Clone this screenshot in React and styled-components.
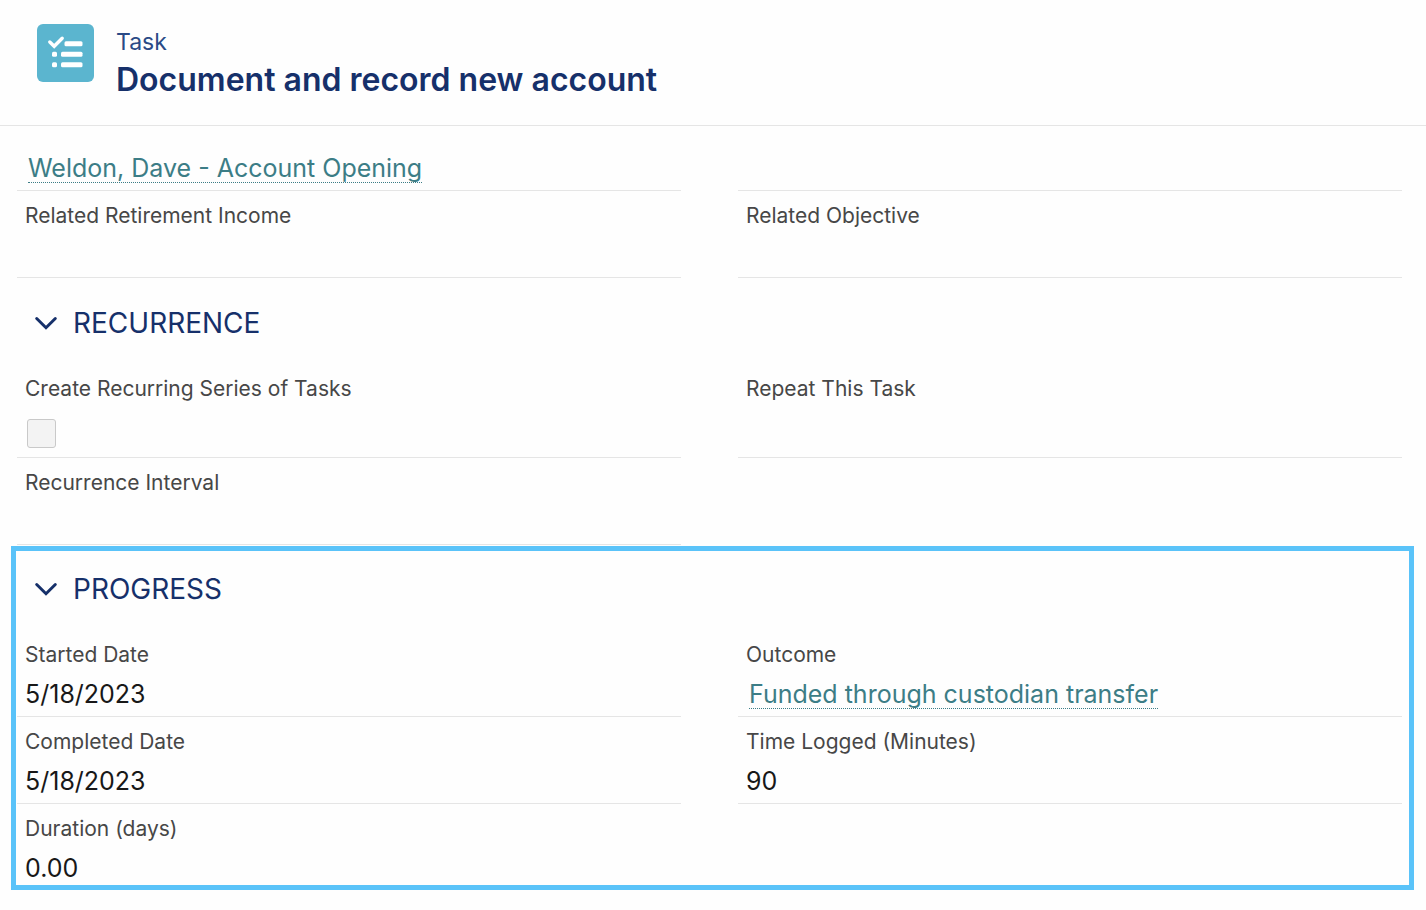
import React from 'react';
import styled, { createGlobalStyle } from 'styled-components';

const COLORS = {
  heading: '#16306a',
  entity: '#2a4a86',
  link: '#3c7d86',
  label: '#474747',
  text: '#181818',
  line: '#e5e5e5',
  task: '#5bb5cf',
  highlight: '#5ac3f9',
};

const relatedFields = [
  { id: 'plan', value: 'Weldon, Dave - Account Opening', link: true },
  { id: 'plan-empty' },
  { id: 'income', label: 'Related Retirement Income' },
  { id: 'objective', label: 'Related Objective' },
];

const recurrenceFields = [
  { id: 'series', label: 'Create Recurring Series of Tasks', checkbox: true },
  { id: 'repeat', label: 'Repeat This Task' },
  { id: 'interval', label: 'Recurrence Interval' },
];

const progressFields = [
  { id: 'started', label: 'Started Date', value: '5/18/2023' },
  { id: 'outcome', label: 'Outcome', value: 'Funded through custodian transfer', link: true },
  { id: 'completed', label: 'Completed Date', value: '5/18/2023' },
  { id: 'time', label: 'Time Logged (Minutes)', value: '90' },
  { id: 'duration', label: 'Duration (days)', value: '0.00', last: true },
];

const TaskIcon = () => (
  <svg viewBox="0 0 57 58" aria-hidden="true">
    <path d="M12.8 18l4.4 4.3 8-8" fill="none" stroke="#fff" strokeWidth="3.4" strokeLinecap="round" strokeLinejoin="miter" />
    <g fill="#fff">
      <rect x="27.5" y="17.2" width="18" height="5" rx="1.5" />
      <rect x="15" y="27.7" width="5" height="5" rx="1.5" />
      <rect x="24" y="27.7" width="21.5" height="5" rx="1.5" />
      <rect x="15" y="38.2" width="5" height="5" rx="1.5" />
      <rect x="24" y="38.2" width="21.5" height="5" rx="1.5" />
    </g>
  </svg>
);

const Chevron = () => (
  <svg width="24" height="24" viewBox="0 0 24 24" aria-hidden="true">
    <path d="M2.7 7.5l9.3 9.2 9.3-9.2" fill="none" stroke="currentColor" strokeWidth="3" strokeLinecap="round" strokeLinejoin="miter" />
  </svg>
);

const Field = ({ field }) => {
  const { id, label, value, link, checkbox, last } = field;
  const Label = checkbox ? FieldLabel : FieldName;

  return (
    <FieldDiv $last={last}>
      {label ? <Label htmlFor={checkbox ? id : undefined}>{label}</Label> : null}
      <Value $tall={checkbox}>
        {checkbox ? <Checkbox type="checkbox" id={id} disabled /> : null}
        {link ? <ValueLink href="#">{value}</ValueLink> : value}
      </Value>
    </FieldDiv>
  );
};

const Section = ({ title, fields }) => {
  const [open, setOpen] = React.useState(true);

  return (
    <section>
      <SectionTitle>
        <SectionButton aria-expanded={open} onClick={() => setOpen(!open)}>
          <Chevron />
          {title}
        </SectionButton>
      </SectionTitle>
      {open ? (
        <FieldGrid>
          {fields.map(field => <Field key={field.id} field={field} />)}
        </FieldGrid>
      ) : null}
    </section>
  );
};

const App = () => (
  <>
    <GlobalStyle />
    <Header>
      <IconTile><TaskIcon /></IconTile>
      <div>
        <Entity>Task</Entity>
        <Title>Document and record new account</Title>
      </div>
    </Header>
    <main>
      <Panel $top={25}>
        <FieldGrid>
          {relatedFields.map(field => <Field key={field.id} field={field} />)}
        </FieldGrid>
      </Panel>
      <Panel $top={7}>
        <Section title="RECURRENCE" fields={recurrenceFields} />
      </Panel>
      <Highlight>
        <Section title="PROGRESS" fields={progressFields} />
      </Highlight>
    </main>
  </>
);

const GlobalStyle = createGlobalStyle`
  * {
    box-sizing: border-box;
  }
  body {
    margin: 0;
    background: #fefefe;
    color: ${COLORS.text};
    font-family: Inter, "Liberation Sans", sans-serif;
  }
`;
const Header = styled.header`
  display: flex;
  gap: 22px;
  padding: 24px 37px 25px;
  border-bottom: 1px solid ${COLORS.line};
`;
const IconTile = styled.div`
  flex: none;
  width: 57px;
  height: 58px;
  border-radius: 6px;
  background: ${COLORS.task};
  svg {
    display: block;
  }
`;
const Entity = styled.p`
  margin: 0;
  color: ${COLORS.entity};
  font-size: 23px;
  line-height: 36px;
`;
const Title = styled.h1`
  margin: 0;
  color: ${COLORS.heading};
  font-size: 32px;
  line-height: 40px;
  font-weight: 600;
`;
const Panel = styled.div`
  padding: ${({ $top }) => $top}px 24px 0 17px;
`;
const Highlight = styled.div`
  margin: 1px 12px 20px 11px;
  padding: 0 7px 0 1px;
  border: 5px solid ${COLORS.highlight};
`;
const SectionTitle = styled.h2`
  margin: 0;
  padding: 18px 0 21px;
`;
const SectionButton = styled.button`
  display: flex;
  align-items: center;
  gap: 15px;
  height: 40px;
  padding: 0 17px;
  border: none;
  background: none;
  color: ${COLORS.heading};
  font-family: inherit;
  font-size: 28px;
  line-height: 40px;
  cursor: pointer;
`;
const FieldGrid = styled.div`
  display: grid;
  grid-template-columns: 1fr 1fr;
  column-gap: 57px;
`;
const FieldDiv = styled.div`
  padding: 0 8px ${({ $last }) => ($last ? 0 : 5)}px;
  border-bottom: ${({ $last }) => ($last ? 'none' : `1px solid ${COLORS.line}`)};
`;
const FieldName = styled.div`
  padding: 11px 0 8px;
  color: ${COLORS.label};
  font-size: 21px;
  line-height: 28px;
`;
const FieldLabel = styled.label`
  display: block;
  padding: 11px 0 8px;
  color: ${COLORS.label};
  font-size: 21px;
  line-height: 28px;
`;
const Value = styled.div`
  display: flex;
  align-items: center;
  height: ${({ $tall }) => ($tall ? 41 : 34)}px;
  font-size: 25px;
  line-height: 34px;
`;
const ValueLink = styled.a`
  margin-left: 3px;
  border-bottom: 1px dotted ${COLORS.link};
  color: ${COLORS.link};
  line-height: 28px;
  text-decoration: none;
`;
const Checkbox = styled.input`
  appearance: none;
  width: 29px;
  height: 29px;
  margin: 4px 2px 0;
  border: 1px solid #c9c9c9;
  border-radius: 3px;
  background: #f3f3f3;
`;

export default App;
